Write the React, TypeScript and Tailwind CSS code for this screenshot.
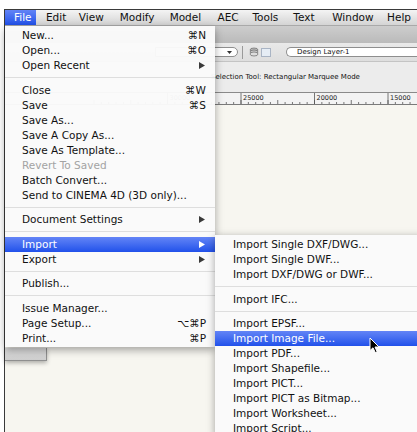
import React from 'react';

type Item =
  | { kind: 'item'; label: string; key?: string; sub?: boolean; disabled?: boolean; active?: boolean }
  | { kind: 'sep' };

const fileMenu: Item[] = [
  { kind: 'item', label: 'New...', key: '⌘N' },
  { kind: 'item', label: 'Open...', key: '⌘O' },
  { kind: 'item', label: 'Open Recent', sub: true },
  { kind: 'sep' },
  { kind: 'item', label: 'Close', key: '⌘W' },
  { kind: 'item', label: 'Save', key: '⌘S' },
  { kind: 'item', label: 'Save As...' },
  { kind: 'item', label: 'Save A Copy As...' },
  { kind: 'item', label: 'Save As Template...' },
  { kind: 'item', label: 'Revert To Saved', disabled: true },
  { kind: 'item', label: 'Batch Convert...' },
  { kind: 'item', label: 'Send to CINEMA 4D (3D only)...' },
  { kind: 'sep' },
  { kind: 'item', label: 'Document Settings', sub: true },
  { kind: 'sep' },
  { kind: 'item', label: 'Import', sub: true, active: true },
  { kind: 'item', label: 'Export', sub: true },
  { kind: 'sep' },
  { kind: 'item', label: 'Publish...' },
  { kind: 'sep' },
  { kind: 'item', label: 'Issue Manager...' },
  { kind: 'item', label: 'Page Setup...', key: '⌥⌘P' },
  { kind: 'item', label: 'Print...', key: '⌘P' },
];

const importMenu: Item[] = [
  { kind: 'item', label: 'Import Single DXF/DWG...' },
  { kind: 'item', label: 'Import Single DWF...' },
  { kind: 'item', label: 'Import DXF/DWG or DWF...' },
  { kind: 'sep' },
  { kind: 'item', label: 'Import IFC...' },
  { kind: 'sep' },
  { kind: 'item', label: 'Import EPSF...' },
  { kind: 'item', label: 'Import Image File...', active: true },
  { kind: 'item', label: 'Import PDF...' },
  { kind: 'item', label: 'Import Shapefile...' },
  { kind: 'item', label: 'Import PICT...' },
  { kind: 'item', label: 'Import PICT as Bitmap...' },
  { kind: 'item', label: 'Import Worksheet...' },
  { kind: 'item', label: 'Import Script...' },
];

const menuBar = [
  { label: 'Edit', w: 'w-[33px]' },
  { label: 'View', w: 'w-[41px]' },
  { label: 'Modify', w: 'w-[50px]' },
  { label: 'Model', w: 'w-[48px]' },
  { label: 'AEC', w: 'w-[35px]' },
  { label: 'Tools', w: 'w-[41px]' },
  { label: 'Text', w: 'w-[39px]' },
  { label: 'Window', w: 'w-[55px]' },
  { label: 'Help', w: 'w-[30px]' },
];

const Arrow = ({ white }: { white?: boolean }) => (
  <svg width="6" height="7" viewBox="0 0 6 7" className="mr-[1px]">
    <polygon points="0,0 6,3.5 0,7" fill={white ? '#ffffff' : '#3a3a3a'} />
  </svg>
);

const MenuRows = ({ items, pl }: { items: Item[]; pl: string }) => (
  <>
    {items.map((it, i) =>
      it.kind === 'sep' ? (
        <div key={i} className="h-[9.5px] flex items-center">
          <div className="h-px w-full bg-[#dedede]" />
        </div>
      ) : (
        <div
          key={i}
          className={`h-[15px] leading-[15px] flex items-center justify-between ${pl} pr-[9px] ${
            it.active
              ? 'bg-gradient-to-b from-[#6384f6] to-[#2150ea] text-white'
              : it.disabled
              ? 'text-[#a3a3a3]'
              : 'text-[#111]'
          }`}
        >
          <span className="whitespace-nowrap">{it.label}</span>
          {it.key && <span className="whitespace-nowrap">{it.key}</span>}
          {it.sub && <Arrow white={it.active} />}
        </div>
      )
    )}
  </>
);

// ruler along the top of the drawing area
const Ruler = () => {
  const majors = [162.5, 236, 309.5, 383];
  const labels = ['30000', '25000', '20000', '15000'];
  const ticks: number[] = [];
  for (let x = 89; x < 412; x += 7.35) ticks.push(x);
  return (
    <svg width="412" height="13" className="block">
      <rect x="0" y="0" width="412" height="13" fill="#f3f3f3" />
      <line x1="0" y1="0.5" x2="412" y2="0.5" stroke="#8a8a8a" />
      <line x1="0" y1="12.5" x2="412" y2="12.5" stroke="#7a7a7a" />
      {ticks.map((x, i) => (
        <line key={i} x1={x} y1={i % 5 === 0 ? 8 : 10} x2={x} y2={12} stroke="#555" strokeWidth="0.8" />
      ))}
      {majors.map((x, i) => (
        <g key={i}>
          <line x1={x} y1="1" x2={x} y2="12" stroke="#555" strokeWidth="0.8" />
          <text x={x + 2} y="8" fontSize="6.5" fill="#222" fontFamily="'DejaVu Sans', sans-serif">
            {labels[i]}
          </text>
        </g>
      ))}
    </svg>
  );
};

const Cursor = () => (
  <svg width="12" height="17" viewBox="0 0 12 17">
    <path
      d="M1 1 L1 13.5 L4 10.8 L6.3 15.6 L8.2 14.8 L6 10 L10 10 Z"
      fill="#000"
      stroke="#fff"
      strokeWidth="1"
      strokeLinejoin="round"
    />
  </svg>
);

export default function App() {
  return (
    <div
      className="w-[417px] h-[432px] overflow-hidden bg-white pl-[4px] pt-[9px] text-[10.5px]"
      style={{ fontFamily: "'DejaVu Sans', 'Liberation Sans', sans-serif" }}
    >
      <div className="relative h-full border-l border-t border-[#3a3a3a] flex flex-col">
        {/* menu bar */}
        <div className="h-[16px] flex items-center bg-gradient-to-b from-[#f4f4f4] to-[#d4d4d4] border-b border-[#a9a9a9] text-[#111]">
          <div className="w-[31px] h-[15px] self-start pl-[9px] leading-[15px] bg-gradient-to-b from-[#6384f6] to-[#2150ea] text-white">
            File
          </div>
          <div className="w-[10px]" />
          {menuBar.map((m) => (
            <div key={m.label} className={`${m.w} whitespace-nowrap leading-[15px]`}>
              {m.label}
            </div>
          ))}
        </div>

        {/* document window behind the menus */}
        <div className="flex-1 flex flex-col">
          <div className="h-[17px] bg-gradient-to-b from-[#cdcdcd] to-[#bababa]" />
          <div className="h-[19px] bg-gradient-to-b from-[#e9e9e9] to-[#dedede] flex items-center border-b border-[#c4c4c4]">
            <div className="ml-[150px] w-[83px] h-[10px] rounded-r-[5px] border border-[#8e8e8e] bg-white flex items-center justify-end pr-[5px]">
              <svg width="5" height="3" viewBox="0 0 5 3">
                <polygon points="0,0 5,0 2.5,3" fill="#333" />
              </svg>
            </div>
            <div className="ml-[4px] w-px h-[13px] bg-[#9a9a9a]" />
            <svg width="10" height="10" viewBox="0 0 10 10" className="ml-[6px]">
              <ellipse cx="5" cy="3" rx="4" ry="2" fill="#bbb" stroke="#666" strokeWidth="0.7" />
              <ellipse cx="5" cy="5" rx="4" ry="2" fill="#ccc" stroke="#666" strokeWidth="0.7" />
              <ellipse cx="5" cy="7" rx="4" ry="2" fill="#ddd" stroke="#666" strokeWidth="0.7" />
            </svg>
            <div className="ml-[2px] w-[10px] h-[9px] border border-[#a9b4c4] bg-[#e6edf5]" />
            <div className="ml-[15px] flex-1 h-[10px] rounded-l-full border border-r-0 border-[#8e8e8e] bg-white pl-[10px] text-[7px] leading-[8px] text-[#111] whitespace-nowrap">
              Design Layer-1
            </div>
          </div>
          <div className="h-[30px] bg-[#ececec] flex items-center">
            <span className="ml-[206px] text-[7px] text-[#111] whitespace-nowrap">
              Selection Tool: Rectangular Marquee Mode
            </span>
          </div>
          <Ruler />
          <div className="flex-1 bg-[#f7f6f0] relative">
            {/* bottom of a floating palette */}
            <div className="absolute left-0 top-[243px] w-[42px] h-[13px] bg-gradient-to-b from-[#dcdcdc] to-[#cfcfcf] border-r border-b border-[#8f8f8f] shadow-[0_2px_4px_rgba(0,0,0,0.3)]" />
          </div>
        </div>

        {/* File menu */}
        <div className="absolute top-[16px] left-0 w-[210px] pt-[2px] pb-[1px] bg-[#fafafa]/[0.97] shadow-[0_3px_8px_rgba(0,0,0,0.35)]">
          <MenuRows items={fileMenu} pl="pl-[17px]" />
        </div>

        {/* Import submenu */}
        <div className="absolute top-[225px] left-[210px] w-[210px] pt-[2px] bg-[#fafafa] shadow-[0_2px_8px_rgba(0,0,0,0.35)]">
          <MenuRows items={importMenu} pl="pl-[18px]" />
        </div>

        <div className="absolute left-[364px] top-[327px]">
          <Cursor />
        </div>
      </div>
    </div>
  );
}
